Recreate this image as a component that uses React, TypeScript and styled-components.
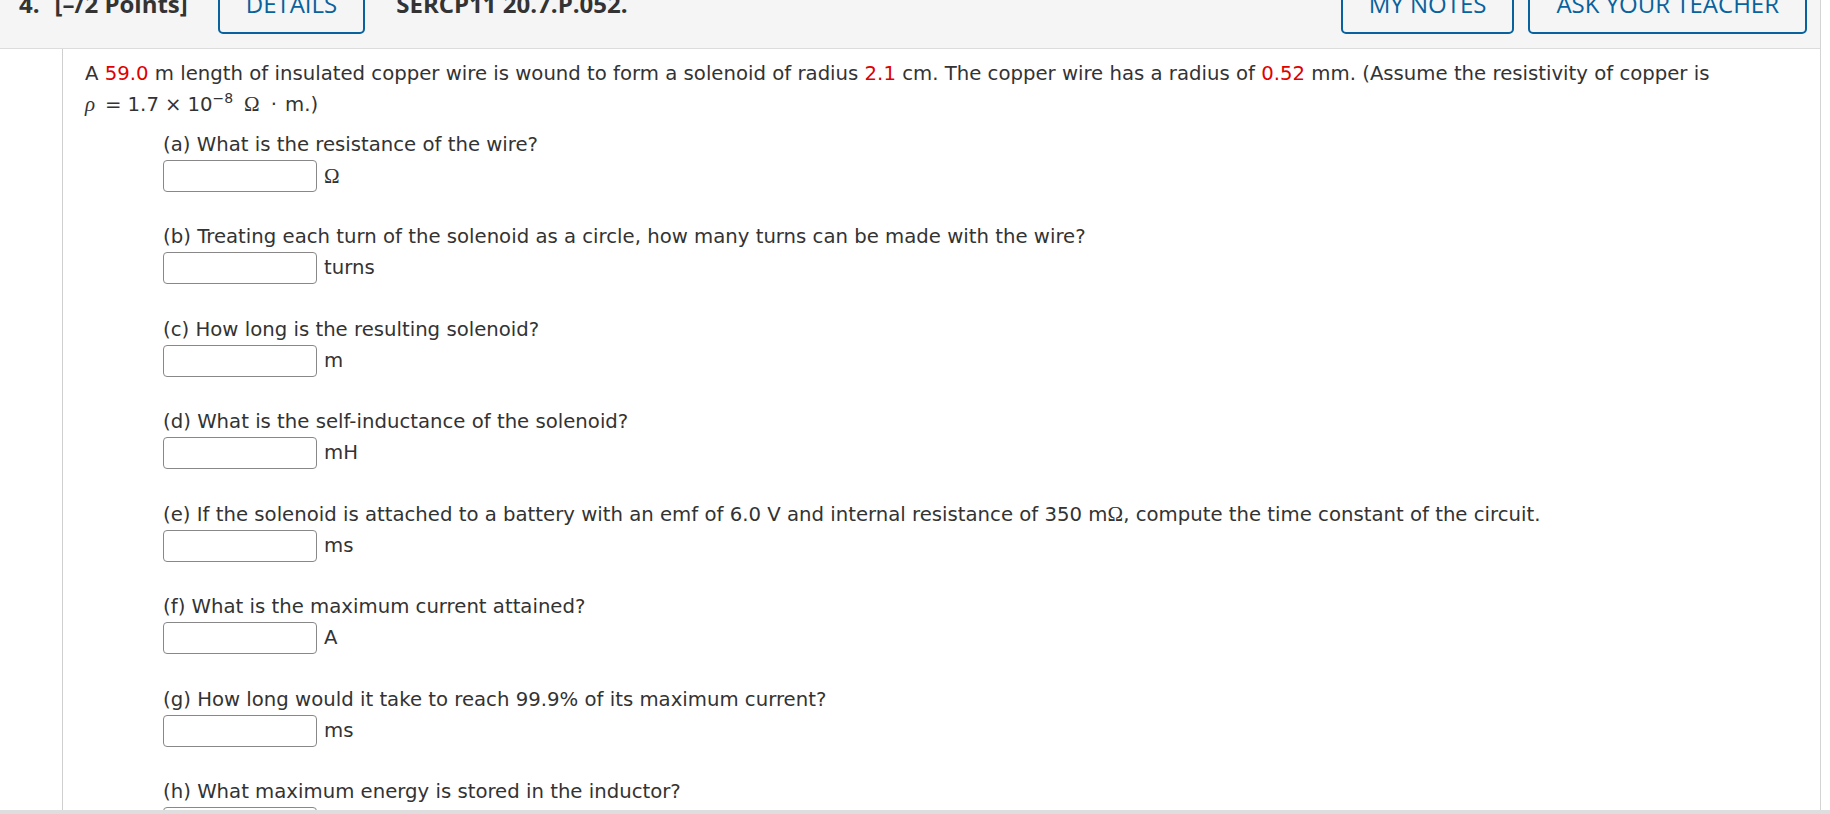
import React from 'react';
import styled, { createGlobalStyle } from 'styled-components';

const GlobalStyle = createGlobalStyle`
  html, body {
    margin: 0;
    padding: 0;
    overflow: hidden;
    background: #fff;
  }
  body {
    font-family: 'DejaVu Sans', Verdana, sans-serif;
    color: #333;
  }
`;

const BLUE = '#07629d';
const RED = '#e00000';

const Viewport = styled.div`
  height: 100vh;
  display: flex;
  flex-direction: column;
`;

const Scroller = styled.div`
  flex: 1;
  overflow: hidden;
`;

const BottomBar = styled.div`
  height: 4px;
  background: #dedede;
`;

const Panel = styled.div`
  width: 1821px;
  box-sizing: border-box;
  border-right: 1px solid #d4d4d4;
`;

const Header = styled.div`
  height: 49px;
  box-sizing: border-box;
  background: #f5f5f5;
  border-bottom: 1px solid #dcdcdc;
  display: flex;
  align-items: flex-end;
  padding: 0 13px 14px 19px;
  font-family: 'Open Sans', sans-serif;
  font-size: 24px;
  line-height: 24px;
`;

const HeaderText = styled.span<{ $gap?: number }>`
  font-weight: 700;
  color: #333;
  margin-bottom: 18px;
  margin-left: ${(p) => p.$gap ?? 0}px;
  white-space: nowrap;
`;

const OutlineButton = styled.button<{ $gap?: number }>`
  height: 50px;
  box-sizing: border-box;
  display: flex;
  align-items: flex-end;
  padding: 0 26px 16px;
  margin-left: ${(p) => p.$gap ?? 0}px;
  border: 2px solid ${BLUE};
  border-radius: 5px;
  background: transparent;
  color: ${BLUE};
  font-family: 'Open Sans', sans-serif;
  font-size: 24px;
  line-height: 24px;
  font-weight: 400;
  white-space: nowrap;
`;

const Spacer = styled.div`
  flex: 1;
`;

const Body = styled.div`
  display: flex;
`;

const Gutter = styled.div`
  width: 62px;
  flex: none;
`;

const Content = styled.div`
  flex: 1;
  border-left: 1px solid #cfcfcf;
  padding: 10px 20px 0 22px;
  font-size: 19.7px;
  line-height: 30px;
`;

const Intro = styled.p`
  margin: 0;
`;

const Given = styled.span`
  color: ${RED};
`;

const MathLine = styled.span`
  white-space: nowrap;
`;

const MathVar = styled.span`
  font-family: 'Liberation Serif', 'DejaVu Serif', serif;
  font-style: italic;
  font-size: 21px;
`;

const Op = styled.span<{ $l: number; $r: number }>`
  margin: 0 ${(p) => p.$r}px 0 ${(p) => p.$l}px;
`;

const Sup = styled.span`
  font-size: 14px;
  line-height: 0;
  vertical-align: 8px;
  margin-right: 11px;
`;

const Ohm = styled.span`
  font-family: 'Liberation Serif', 'DejaVu Serif', serif;
  font-size: 21px;
`;

const Questions = styled.div`
  margin: 10px 0 0 78px;
`;

const Question = styled.div`
  margin-bottom: 30.3px;
`;

const Label = styled.div`
  white-space: nowrap;
`;

const AnswerRow = styled.div`
  display: flex;
  align-items: center;
  gap: 7px;
  height: 32px;
`;

const AnswerBox = styled.input`
  width: 154px;
  height: 32px;
  box-sizing: border-box;
  border: 1px solid #888;
  border-radius: 4px;
  background: #fff;
  margin: 0;
  padding: 0 6px;
  font: inherit;
`;

const Unit = styled.span`
  white-space: nowrap;
`;

const OhmUnit = () => <Ohm>Ω</Ohm>;

const questions: { part: string; text: React.ReactNode; unit: React.ReactNode }[] = [
  { part: 'a', text: 'What is the resistance of the wire?', unit: <OhmUnit /> },
  {
    part: 'b',
    text: 'Treating each turn of the solenoid as a circle, how many turns can be made with the wire?',
    unit: 'turns',
  },
  { part: 'c', text: 'How long is the resulting solenoid?', unit: 'm' },
  { part: 'd', text: 'What is the self-inductance of the solenoid?', unit: 'mH' },
  {
    part: 'e',
    text: (
      <>
        If the solenoid is attached to a battery with an emf of 6.0 V and internal resistance of 350 m
        <OhmUnit />, compute the time constant of the circuit.
      </>
    ),
    unit: 'ms',
  },
  { part: 'f', text: 'What is the maximum current attained?', unit: 'A' },
  { part: 'g', text: 'How long would it take to reach 99.9% of its maximum current?', unit: 'ms' },
  { part: 'h', text: 'What maximum energy is stored in the inductor?', unit: 'mJ' },
];

const App = () => (
  <>
    <GlobalStyle />
    <Viewport>
      <Scroller>
        <Panel>
          <Header>
            <HeaderText>4.</HeaderText>
            <HeaderText $gap={15}>[–/2 Points]</HeaderText>
            <OutlineButton $gap={30}>DETAILS</OutlineButton>
            <HeaderText $gap={31}>SERCP11 20.7.P.052.</HeaderText>
            <Spacer />
            <OutlineButton>MY NOTES</OutlineButton>
            <OutlineButton $gap={14}>ASK YOUR TEACHER</OutlineButton>
          </Header>
          <Body>
            <Gutter />
            <Content>
              <Intro>
                A <Given>59.0</Given> m length of insulated copper wire is wound to form a solenoid of
                radius <Given>2.1</Given> cm. The copper wire has a radius of <Given>0.52</Given> mm.
                (Assume the resistivity of copper is{' '}
                <MathLine>
                  <MathVar>ρ</MathVar>
                  <Op $l={10} $r={6}>=</Op>1.7<Op $l={6} $r={6}>×</Op>10<Sup>−8</Sup>
                  <Ohm>Ω</Ohm>
                  <Op $l={11} $r={8}>·</Op>m.)
                </MathLine>
              </Intro>
              <Questions>
                {questions.map((q) => (
                  <Question key={q.part}>
                    <Label>
                      ({q.part}) {q.text}
                    </Label>
                    <AnswerRow>
                      <AnswerBox type='text' aria-label={`part ${q.part}`} />
                      <Unit>{q.unit}</Unit>
                    </AnswerRow>
                  </Question>
                ))}
              </Questions>
            </Content>
          </Body>
        </Panel>
      </Scroller>
      <BottomBar />
    </Viewport>
  </>
);

export default App;
